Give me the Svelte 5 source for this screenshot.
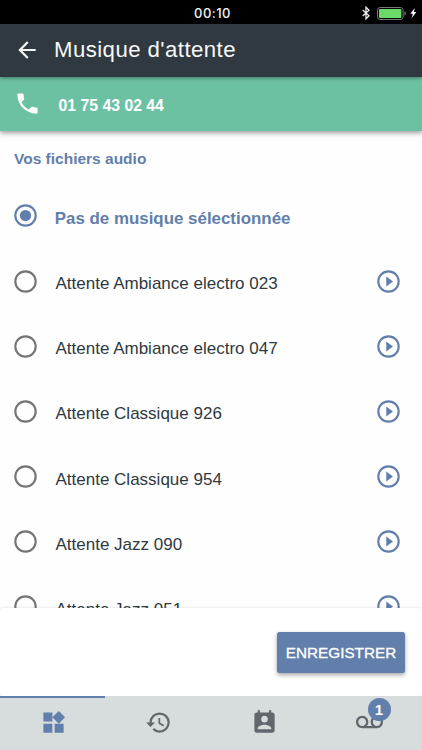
<script lang="ts">
  let selected = 0;

  const tracks = [
    "Pas de musique sélectionnée",
    "Attente Ambiance electro 023",
    "Attente Ambiance electro 047",
    "Attente Classique 926",
    "Attente Classique 954",
    "Attente Jazz 090",
    "Attente Jazz 051",
  ];

  const tabs = [
    {
      name: "widgets",
      path: "M13 13v8h8v-8h-8zM3 21h8v-8H3v8zM3 3v8h8V3H3zm13.66-1.31L11 7.34 16.66 13l5.66-5.66-5.66-5.65z",
    },
    {
      name: "history",
      path: "M13 3a9 9 0 0 0-9 9H1l3.89 3.89.07.14L9 12H6c0-3.87 3.13-7 7-7s7 3.13 7 7-3.13 7-7 7c-1.93 0-3.68-.79-4.94-2.06l-1.42 1.42A8.954 8.954 0 0 0 13 21a9 9 0 0 0 0-18zm-1 5v5l4.28 2.54.72-1.21-3.5-2.08V8H12z",
    },
    {
      name: "contacts",
      path: "M19 3h-1V1h-2v2H8V1H6v2H5c-1.11 0-2 .9-2 2v14c0 1.1.89 2 2 2h14c1.1 0 2-.9 2-2V5c0-1.1-.9-2-2-2zm-7 3c1.66 0 3 1.34 3 3s-1.34 3-3 3-3-1.34-3-3 1.34-3 3-3zm6 12H6v-1c0-2 4-3.1 6-3.1s6 1.1 6 3.1v1z",
    },
    {
      name: "voicemail",
      badge: 1,
      path: "M18.5 6C15.46 6 13 8.46 13 11.5c0 1.33.47 2.55 1.26 3.5H9.74c.79-.95 1.26-2.17 1.26-3.5C11 8.46 8.54 6 5.5 6S0 8.46 0 11.5 2.46 17 5.5 17h13c3.04 0 5.5-2.46 5.5-5.5S21.54 6 18.5 6zm-13 9C3.57 15 2 13.43 2 11.5S3.57 8 5.5 8 9 9.57 9 11.5 7.43 15 5.5 15zm13 0c-1.93 0-3.5-1.57-3.5-3.5S16.57 8 18.5 8 22 9.57 22 11.5 20.43 15 18.5 15z",
    },
  ];
</script>

<div class="app">
  <div class="status">
    <span></span>
    <span class="clock">00:10</span>
    <div class="indicators">
      <svg class="bluetooth" viewBox="0 0 8 14">
        <path d="M.7 4 7 9.8 4 12.8V1.2L7 4.2.7 10" />
      </svg>
      <svg class="battery" viewBox="0 0 30 13">
        <rect x=".5" y=".5" width="25.6" height="12" rx="2.6" fill="none" stroke="#777" />
        <rect x="2" y="2" width="22.4" height="9" rx="1" fill="#6bd968" />
        <path d="M27.4 4.3c2 .5 2 3.9 0 4.4z" fill="#777" />
      </svg>
      <svg class="bolt" viewBox="0 0 7 10">
        <path d="M4.8 0 .3 5.7h2.5L1.7 10l4.7-5.9H3.9z" />
      </svg>
    </div>
  </div>

  <header>
    <svg class="back" viewBox="0 0 24 24">
      <path d="M20 11H7.83l5.59-5.59L12 4l-8 8 8 8 1.41-1.41L7.83 13H20v-2z" />
    </svg>
    <h1>Musique d'attente</h1>
  </header>

  <div class="phone">
    <svg class="icon" viewBox="0 0 24 24">
      <path
        d="M6.62 10.79c1.44 2.83 3.76 5.14 6.59 6.59l2.2-2.2c.27-.27.67-.36 1.02-.24 1.12.37 2.33.57 3.57.57.55 0 1 .45 1 1V20c0 .55-.45 1-1 1-9.39 0-17-7.61-17-17 0-.55.45-1 1-1h3.5c.55 0 1 .45 1 1 0 1.25.2 2.45.57 3.57.11.35.03.74-.25 1.02l-2.2 2.2z"
      />
    </svg>
    <span>01 75 43 02 44</span>
  </div>

  <main>
    <h2>Vos fichiers audio</h2>
    {#each tracks as track, i}
      <label class="track" class:selected={selected === i}>
        <input type="radio" name="track" value={i} bind:group={selected} />
        <svg class="icon" viewBox="0 0 24 24">
          <circle class="ring" cx="12" cy="12" r="9.05" />
          {#if selected === i}
            <circle class="dot" cx="12" cy="12" r="5" />
          {/if}
        </svg>
        <span class="name">{track}</span>
        {#if i > 0}
          <svg class="icon play" viewBox="0 0 24 24">
            <circle class="ring" cx="12" cy="12" r="9.05" />
            <path d="M10 16.5l6-4.5-6-4.5v9z" />
          </svg>
        {/if}
      </label>
    {/each}
  </main>

  <footer>
    <button>ENREGISTRER</button>
  </footer>

  <nav>
    {#each tabs as tab, i}
      <div class="tab" class:active={i === 0}>
        <svg class="icon" viewBox="0 0 24 24" aria-label={tab.name}>
          <path d={tab.path} />
        </svg>
        {#if tab.badge}
          <span class="badge">{tab.badge}</span>
        {/if}
      </div>
    {/each}
  </nav>
</div>

<style>
  .app {
    display: flex;
    flex-direction: column;
    width: 422px;
    height: 750px;
    overflow: hidden;
    background: #fefefe;
    font-family: "Liberation Sans", Arial, sans-serif;
    color: #2f393e;
  }

  svg {
    display: block;
    flex: none;
  }

  .icon {
    width: 27px;
    height: 27px;
  }

  .status {
    display: grid;
    grid-template-columns: 1fr auto 1fr;
    align-items: center;
    flex: none;
    height: 24px;
    padding: 2px 5px 0 8px;
    box-sizing: border-box;
    background: #000;
    color: #f4f4f4;
  }

  .clock {
    padding-top: 1px;
    font: 500 13px/21px Inter, sans-serif;
    letter-spacing: 0.5px;
  }

  .indicators {
    display: flex;
    align-items: center;
    justify-content: flex-end;
  }

  .bluetooth {
    width: 8px;
    height: 14px;
    margin-right: 7px;
    fill: none;
    stroke: #eee;
    stroke-width: 1.3;
  }

  .battery {
    width: 30px;
    height: 13px;
    margin-right: 3px;
  }

  .bolt {
    width: 7px;
    height: 10px;
    fill: #fff;
  }

  header {
    position: relative;
    z-index: 2;
    display: flex;
    align-items: center;
    flex: none;
    height: 53px;
    padding: 0 0 1px 14px;
    box-sizing: border-box;
    background: #30393f;
    box-shadow: 0 1px 4px rgba(0, 0, 0, 0.4);
    color: #f7f8f8;
  }

  .back {
    width: 26px;
    height: 26px;
    fill: currentColor;
  }

  h1 {
    margin: 0 0 0 14px;
    font-size: 22.2px;
    font-weight: 400;
    letter-spacing: 0.02em;
  }

  .phone {
    position: relative;
    z-index: 1;
    display: flex;
    align-items: center;
    flex: none;
    height: 54px;
    padding-left: 14px;
    background: #6dc1a3;
    box-shadow: 0 2px 5px rgba(0, 0, 0, 0.4);
    color: #fff;
    fill: #fff;
    font-size: 15.8px;
    font-weight: 700;
  }

  .phone .icon {
    margin-bottom: 1px;
  }

  .phone span {
    margin: 3px 0 0 17.5px;
  }

  main {
    flex: 1;
    min-height: 0;
    overflow: hidden;
    padding: 0 20.5px 0 11.5px;
  }

  h2 {
    height: 52.4px;
    margin: 0;
    padding: 18px 0 0 2.5px;
    box-sizing: border-box;
    color: #627fab;
    font-size: 15.5px;
    line-height: 20px;
  }

  .track {
    display: flex;
    align-items: center;
    height: 65.15px;
    fill: #627fab;
    font-size: 17px;
  }

  .track input {
    display: none;
  }

  .ring {
    fill: none;
    stroke: #757575;
    stroke-width: 1.9;
  }

  .name {
    flex: 1;
    margin: 6px 0 0 17px;
  }

  .selected {
    color: #627fab;
    font-size: 16.9px;
    font-weight: 700;
  }

  .selected .name {
    margin-left: 16.3px;
  }

  .selected .ring,
  .play .ring {
    stroke: #627fab;
  }

  footer {
    position: relative;
    display: flex;
    align-items: center;
    justify-content: flex-end;
    flex: none;
    height: 88px;
    padding-right: 17px;
    border-radius: 3px;
    background: #fff;
    box-shadow: 0 0 3px rgba(0, 0, 0, 0.14);
  }

  button {
    width: 128px;
    height: 41px;
    padding: 1px 0 0;
    border: none;
    border-radius: 2.5px;
    background: #627fab;
    box-shadow: 0 2px 4px rgba(0, 0, 0, 0.35);
    color: #fff;
    font-family: inherit;
    font-size: 15.3px;
    -webkit-text-stroke: 0.3px #fff;
  }

  nav {
    position: relative;
    display: flex;
    flex: none;
    height: 54px;
    background: #d7dddd;
    fill: #62676d;
  }

  .tab {
    position: relative;
    display: flex;
    align-items: center;
    justify-content: center;
    flex: 1;
    padding: 0 0 1px 1px;
  }

  .active {
    fill: #627fab;
  }

  .active::before {
    content: "";
    position: absolute;
    top: -0.5px;
    left: 0;
    width: 105px;
    height: 2.5px;
    background: #627fab;
  }

  .badge {
    position: absolute;
    top: 2px;
    left: 51px;
    width: 23px;
    height: 23px;
    border-radius: 50%;
    background: #627fab;
    color: #fff;
    font-size: 15px;
    font-weight: 700;
    line-height: 24px;
    text-align: center;
  }
</style>
